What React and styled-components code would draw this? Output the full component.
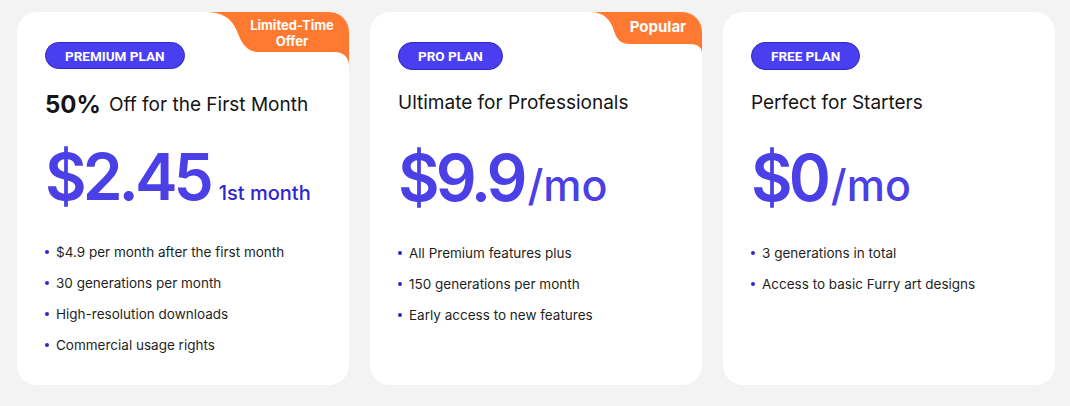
import React from "react";
import styled, { createGlobalStyle } from "styled-components";

const GlobalStyle = createGlobalStyle`
  body {
    margin: 0;
    background: #f3f3f3;
    font-family: "Inter", "Liberation Sans", sans-serif;
  }
`;

const Row = styled.div`
  display: flex;
  gap: 21px;
  padding: 12px 17px;
`;

const Card = styled.div`
  position: relative;
  flex: none;
  width: 332px;
  height: 373px;
  box-sizing: border-box;
  padding: 30px 28px;
  background: #fff;
  border-radius: 20px;
  overflow: hidden;
  display: flex;
  flex-direction: column;
  align-items: flex-start;
`;

const Badge = styled.div`
  height: 28px;
  box-sizing: border-box;
  padding: 0 19px;
  display: flex;
  align-items: center;
  background: #4a3ff0;
  border: 1px solid #3227c4;
  border-radius: 14px;
  color: #fff;
  font-family: Roboto, sans-serif;
  font-weight: 700;
  font-size: 13.5px;
`;

const Heading = styled.div`
  height: ${(p) => 36 - p.$shift}px;
  margin-top: ${(p) => 14 + p.$shift}px;
  display: flex;
  align-items: center;
  font-size: 19px;
  color: #141414;
  white-space: nowrap;

  b {
    font-size: 24px;
    font-weight: 700;
    margin-right: 8px;
  }
`;

const Price = styled.div`
  margin-top: 26px;
  display: flex;
  align-items: baseline;
  line-height: 1;
  white-space: nowrap;
  color: #4b3fe6;
`;

const Amount = styled.span`
  font-size: 64px;
  font-weight: 600;
  letter-spacing: -4px;
`;

const Unit = styled.span`
  font-size: ${(p) => (p.$small ? "20px" : "43px")};
  font-weight: 500;
  margin-left: ${(p) => (p.$small ? "9px" : "4px")};
  color: ${(p) => (p.$small ? "#3125cf" : "#4b3fe6")};
`;

const List = styled.ul`
  list-style: none;
  margin: 33px 0 0;
  padding: 0;
  display: flex;
  flex-direction: column;
  gap: 11px;
`;

const Item = styled.li`
  display: flex;
  align-items: center;
  gap: 7px;
  height: 20px;
  font-size: 13.5px;
  color: #1f1f1f;
  white-space: nowrap;

  &::before {
    content: "";
    width: 4px;
    height: 4px;
    border-radius: 50%;
    background: #3125cf;
  }
`;

const Ribbon = styled.div`
  position: absolute;
  top: 0;
  right: 0;
  width: ${(p) => p.$w}px;
  height: ${(p) => p.$h}px;

  svg {
    position: absolute;
    inset: 0;
  }
`;

const RibbonText = styled.div`
  position: absolute;
  top: ${(p) => p.$top}px;
  left: ${(p) => p.$left}px;
  right: 0;
  text-align: center;
  color: #fff;
  font-weight: 700;
  font-size: ${(p) => p.$size}px;
  line-height: 16px;
`;

const plans = [
  {
    badge: "PREMIUM PLAN",
    shift: 7,
    heading: (
      <>
        <b>50%</b>Off for the First Month
      </>
    ),
    amount: "$2.45",
    unit: "1st month",
    small: true,
    ribbon: {
      w: 144,
      h: 56,
      d: "M0 0 H144 V54 C144 46 139 40 129 40 H54 C44 40 38 34 34 24 C29 10 22 0 0 0 Z",
      text: ["Limited-Time", "Offer"],
      top: 5,
      left: 30,
      size: 13,
    },
    items: [
      "$4.9 per month after the first month",
      "30 generations per month",
      "High-resolution downloads",
      "Commercial usage rights",
    ],
  },
  {
    badge: "PRO PLAN",
    shift: 0,
    heading: "Ultimate for Professionals",
    amount: "$9.9",
    unit: "/mo",
    ribbon: {
      w: 112,
      h: 42,
      d: "M0 0 H112 V41 C112 36 108 32 100 32 H40 C31 32 27 28 24 19 C21 8 14 0 0 0 Z",
      text: ["Popular"],
      top: 7,
      left: 24,
      size: 15,
    },
    items: [
      "All Premium features plus",
      "150 generations per month",
      "Early access to new features",
    ],
  },
  {
    badge: "FREE PLAN",
    shift: 0,
    heading: "Perfect for Starters",
    amount: "$0",
    unit: "/mo",
    items: ["3 generations in total", "Access to basic Furry art designs"],
  },
];

export default function App() {
  return (
    <>
      <GlobalStyle />
      <Row>
        {plans.map((p) => (
          <Card key={p.badge}>
            {p.ribbon && (
              <Ribbon $w={p.ribbon.w} $h={p.ribbon.h}>
                <svg width={p.ribbon.w} height={p.ribbon.h} viewBox={`0 0 ${p.ribbon.w} ${p.ribbon.h}`}>
                  <path d={p.ribbon.d} fill="#ff7a30" />
                </svg>
                <RibbonText $top={p.ribbon.top} $left={p.ribbon.left} $size={p.ribbon.size}>
                  {p.ribbon.text.map((t) => (
                    <div key={t}>{t}</div>
                  ))}
                </RibbonText>
              </Ribbon>
            )}
            <Badge>{p.badge}</Badge>
            <Heading $shift={p.shift}>{p.heading}</Heading>
            <Price>
              <Amount>{p.amount}</Amount>
              <Unit $small={p.small}>{p.unit}</Unit>
            </Price>
            <List>
              {p.items.map((t) => (
                <Item key={t}>{t}</Item>
              ))}
            </List>
          </Card>
        ))}
      </Row>
    </>
  );
}
